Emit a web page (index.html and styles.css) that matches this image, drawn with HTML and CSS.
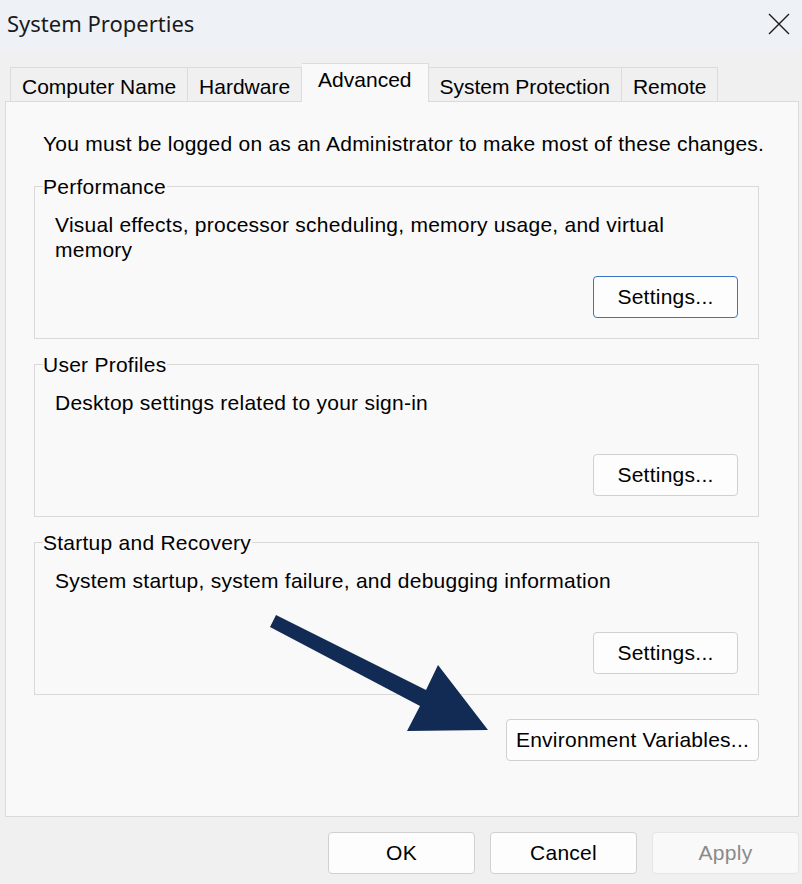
FILE: index.html
```html
<!DOCTYPE html>
<html lang="en">
<head>
<meta charset="utf-8">
<title>System Properties</title>
<link rel="stylesheet" href="styles.css">
</head>
<body>
<div class="window">
  <header class="titlebar">
    <span class="title">System Properties</span>
    <svg class="close" width="22" height="22" viewBox="0 0 22 22" aria-hidden="true">
      <path d="M1 1 L21 21 M21 1 L1 21" stroke="#1b1b1b" stroke-width="1.4" fill="none"/>
    </svg>
  </header>

  <main class="content">
    <nav class="tabs">
      <div class="tab">Computer Name</div>
      <div class="tab">Hardware</div>
      <div class="tab active">Advanced</div>
      <div class="tab">System Protection</div>
      <div class="tab">Remote</div>
    </nav>

    <section class="panel">
      <p class="intro">You must be logged on as an Administrator to make most of these changes.</p>

      <fieldset class="group">
        <legend>Performance</legend>
        <div class="group-body">
          <p class="desc">Visual effects, processor scheduling, memory usage, and virtual memory</p>
          <button class="btn default">Settings...</button>
        </div>
      </fieldset>

      <fieldset class="group">
        <legend>User Profiles</legend>
        <div class="group-body">
          <p class="desc">Desktop settings related to your sign-in</p>
          <button class="btn">Settings...</button>
        </div>
      </fieldset>

      <fieldset class="group">
        <legend>Startup and Recovery</legend>
        <div class="group-body">
          <p class="desc">System startup, system failure, and debugging information</p>
          <button class="btn">Settings...</button>
        </div>
      </fieldset>

      <div class="env-row">
        <button class="btn env">Environment Variables...</button>
      </div>
    </section>

    <footer class="footer">
      <button class="btn foot">OK</button>
      <button class="btn foot">Cancel</button>
      <button class="btn foot disabled">Apply</button>
    </footer>
  </main>

  <svg class="arrow" width="802" height="884" viewBox="0 0 802 884" aria-hidden="true">
    <polygon points="276,615 426,690 438,665 488,730 407,731 420,706 270,627" fill="#122b54"/>
  </svg>
</div>
</body>
</html>
```

FILE: styles.css
```css
* { box-sizing: border-box; }

html, body {
  margin: 0;
  padding: 0;
  background: #f0f0f0;
}

body {
  width: 802px;
  height: 884px;
  overflow: hidden;
  font-family: "Liberation Sans", Arial, sans-serif;
  font-size: 21px;
  letter-spacing: 0.25px;
  color: #000;
}

.window {
  position: relative;
  width: 802px;
  height: 884px;
}

.titlebar {
  height: 50px;
  background: #eef2f7;
  display: flex;
  align-items: center;
  justify-content: space-between;
  padding: 0 12px 4px 7px;
}

.title {
  font-family: "Noto Sans", "Open Sans", sans-serif;
  font-size: 22px;
  color: #1a1a1a;
  letter-spacing: 0;
}

.close {
  display: block;
  margin-top: 2px;
}

.content {
  padding: 13px 3px 0 5px;
}

.tabs {
  display: flex;
  align-items: flex-end;
  padding-left: 5px;
  height: 38px;
}

.tab {
  height: 34px;
  line-height: 34px;
  padding: 2px 11px 0 11px;
  border: 1px solid #dcdcdc;
  border-bottom: none;
  border-left: none;
  background: #f0f0f0;
  white-space: nowrap;
  letter-spacing: 0;
}

.tab:first-child {
  border-left: 1px solid #dcdcdc;
}

.tab.active {
  position: relative;
  z-index: 1;
  height: 39px;
  line-height: 31px;
  padding: 0 16px 0 16px;
  margin-bottom: -1px;
  background: #f9f9f9;
  border-left: none;
}

.panel {
  background: #f9f9f9;
  border: 1px solid #dadada;
  width: 794px;
  padding: 29px 0 55px 28px;
}

.intro {
  margin: 0 0 18px 9px;
  line-height: 25px;
  white-space: nowrap;
}

.group {
  width: 725px;
  margin: 0 0 13px 0;
  padding: 0 20px 20px 8px;
  border: 1px solid #d9d9d9;
  min-width: 0;
}

.group legend {
  padding: 0 1px 0 0;
  line-height: 25px;
}

.group-body {
  height: 119px;
  padding: 13px 0 0 12px;
  display: flex;
  flex-direction: column;
}

.desc {
  margin: 0;
  line-height: 25px;
  max-width: 650px;
}

.btn {
  font-family: "Liberation Sans", Arial, sans-serif;
  font-size: 21px;
  letter-spacing: 0.25px;
  color: #000;
  background: #fdfdfd;
  border: 1px solid #d0d0d0;
  border-radius: 4px;
  height: 42px;
  padding: 0;
}

.group-body .btn {
  width: 145px;
  margin-top: auto;
  align-self: flex-end;
}

.btn.default {
  border-color: #3a74c4;
  background: #fdfdfd;
}

.env-row {
  display: flex;
  justify-content: flex-end;
  width: 725px;
  padding-top: 11px;
}

.btn.env {
  width: 253px;
}

.footer {
  display: flex;
  justify-content: flex-end;
  gap: 15px;
  padding-top: 15px;
}

.btn.foot {
  width: 147px;
}

.btn.disabled {
  color: #8a8a8a;
  background: #f9f9f9;
  border-color: #e6e6e6;
}

.arrow {
  position: absolute;
  left: 0;
  top: 0;
  pointer-events: none;
}
```
